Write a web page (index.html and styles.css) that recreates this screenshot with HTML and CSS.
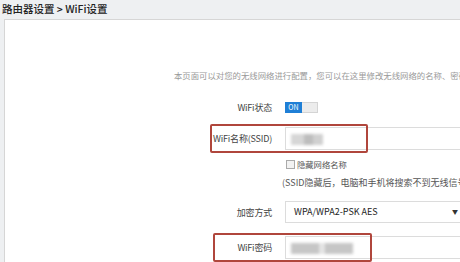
FILE: index.html
```html
<!DOCTYPE html>
<html lang="zh-CN">
<head>
<meta charset="utf-8">
<title>WiFi设置</title>
<link rel="stylesheet" href="styles.css">
</head>
<body>
<div class="crumb">路由器设置 &gt; WiFi设置</div>
<div class="panel">
  <div class="content">
    <p class="desc">本页面可以对您的无线网络进行配置，您可以在这里修改无线网络的名称、密码和加密方式等信息。</p>
    <div class="row row-status">
      <span class="label">WiFi状态</span>
      <span class="toggle"><span class="toggle-on">ON</span></span>
    </div>
    <div class="row row-ssid">
      <span class="label">WiFi名称(SSID)</span>
      <span class="input"><span class="blur blur-ssid"></span></span>
      <span class="mark mark-ssid"></span>
    </div>
    <div class="row row-check">
      <span class="label"></span>
      <span class="check"><span class="box"></span>隐藏网络名称</span>
    </div>
    <div class="row row-hint">
      <span class="label"></span>
      <span class="hint">(SSID隐藏后，电脑和手机将搜索不到无线信号，</span>
    </div>
    <div class="row row-select">
      <span class="label">加密方式</span>
      <span class="select">WPA/WPA2-PSK AES<span class="arrow">▼</span></span>
    </div>
    <div class="row row-pwd">
      <span class="label">WiFi密码</span>
      <span class="input"><span class="blur blur-pwd"></span></span>
      <span class="mark mark-pwd"></span>
    </div>
  </div>
</div>
</body>
</html>
```
FILE: styles.css
```css
html, body {
  margin: 0;
  padding: 0;
  width: 460px;
  height: 262px;
  overflow: hidden;
  background: #eef0f2;
  font-family: "Noto Sans CJK SC", "Noto Sans", sans-serif;
  color: #444;
}
.crumb {
  height: 19px;
  line-height: 17px;
  padding-left: 2px;
  font-size: 10.5px;
  font-weight: 500;
  color: #222;
  white-space: nowrap;
}
.panel {
  margin-left: 4px;
  height: 243px;
  background: #fff;
  border-left: 1px solid #d6d6d6;
  border-top: 1px solid #d6d6d6;
  overflow: hidden;
}
.content {
  padding-left: 169px;
  width: 600px;
}
.desc {
  margin: 49px 0 0;
  height: 12px;
  line-height: 12px;
  font-size: 8.4px;
  color: #999;
  white-space: nowrap;
}
.row {
  position: relative;
  display: grid;
  grid-template-columns: 98px 1fr;
  column-gap: 13px;
  align-items: center;
}
.label {
  text-align: right;
  font-size: 9px;
  letter-spacing: -0.2px;
  color: #444;
  white-space: nowrap;
}
.row-status { margin-top: 20px; height: 12px; }
.row-ssid { margin-top: 14px; height: 23px; }
.row-check { margin-top: 8px; height: 12px; }
.row-hint { margin-top: 6px; height: 12px; }
.row-select { margin-top: 13px; height: 22px; }
.row-pwd { margin-top: 13px; height: 23px; }

.toggle {
  display: flex;
  width: 33px;
  height: 11px;
  box-sizing: border-box;
  border: 1px solid #d4d4d4;
  background: #ececec;
}
.toggle-on {
  width: 17px;
  height: 11px;
  margin: -1px 0 0 -1px;
  background: #1f7fd6;
  color: #fff;
  font-size: 7px;
  line-height: 11px;
  text-align: center;
}
.input, .select {
  position: relative;
  display: block;
  width: 230px;
  height: 100%;
  box-sizing: border-box;
  border: 1px solid #dcdcdc;
  background: #fff;
}
.blur {
  position: absolute;
  top: 6px;
  left: 5px;
  height: 11px;
  background: #cdcdcd;
  filter: blur(1.5px);
}
.blur-ssid { width: 32px; background: linear-gradient(90deg, #d6d6d6 0 40%, #bdbdbd 40% 70%, #d0d0d0 70%); }
.blur-pwd { width: 62px; background: linear-gradient(90deg, #c6c6c6 0 45%, #e4e4e4 45% 55%, #c6c6c6 55%); }
.select {
  padding-left: 8px;
  font-size: 9px;
  line-height: 20px;
  color: #222;
}
.arrow {
  position: absolute;
  left: 166px;
  top: 0;
  font-size: 6px;
  color: #333;
}
.check {
  display: flex;
  align-items: center;
  gap: 2px;
  font-size: 8.3px;
  color: #555;
  margin-left: 1px;
}
.box {
  width: 7px;
  height: 7px;
  border: 1px solid #aaa;
  background: #f2f2f2;
}
.hint {
  font-size: 9px;
  color: #555;
  white-space: nowrap;
  margin-left: -3px;
}
.mark {
  position: absolute;
  top: -3px;
  height: 29px;
  box-sizing: border-box;
  border: 2px solid #b0463c;
  border-radius: 2px;
}
.mark-ssid { left: 36px; width: 158px; }
.mark-pwd { left: 39px; width: 159px; }
```
